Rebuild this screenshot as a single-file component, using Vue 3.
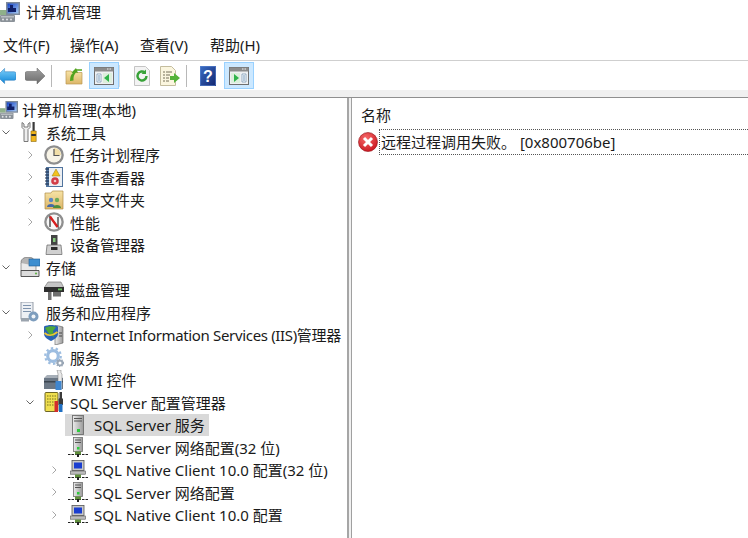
<script setup>
const menus = ['文件(F)', '操作(A)', '查看(V)', '帮助(H)']
const rows = [
  { label: '计算机管理(本地)', icon: 'computer', level: 0 },
  { label: '系统工具', icon: 'tools', level: 1, arrow: 'open' },
  { label: '任务计划程序', icon: 'clock', level: 2, arrow: 'closed' },
  { label: '事件查看器', icon: 'eventlog', level: 2, arrow: 'closed' },
  { label: '共享文件夹', icon: 'share', level: 2, arrow: 'closed' },
  { label: '性能', icon: 'perf', level: 2, arrow: 'closed' },
  { label: '设备管理器', icon: 'device', level: 2 },
  { label: '存储', icon: 'storage', level: 1, arrow: 'open' },
  { label: '磁盘管理', icon: 'disk', level: 2 },
  { label: '服务和应用程序', icon: 'apps', level: 1, arrow: 'open' },
  { label: 'Internet Information Services (IIS)管理器', icon: 'iis', level: 2, arrow: 'closed', tight: true },
  { label: '服务', icon: 'gear', level: 2 },
  { label: 'WMI 控件', icon: 'wmi', level: 2 },
  { label: 'SQL Server 配置管理器', icon: 'sql', level: 2, arrow: 'open' },
  { label: 'SQL Server 服务', icon: 'server', level: 3, selected: true },
  { label: 'SQL Server 网络配置(32 位)', icon: 'netserver', level: 3 },
  { label: 'SQL Native Client 10.0 配置(32 位)', icon: 'client', level: 3, arrow: 'closed' },
  { label: 'SQL Server 网络配置', icon: 'netserver', level: 3, arrow: 'closed' },
  { label: 'SQL Native Client 10.0 配置', icon: 'client', level: 3, arrow: 'closed' }
]
</script>

<template>
  <div class="window">
    <svg class="defs" aria-hidden="true">
      <defs>
        <linearGradient id="screen" x1="0" y1="0" x2="1" y2="1">
          <stop offset="0" stop-color="#1040c8" /><stop offset="1" stop-color="#a9cdf5" />
        </linearGradient>
        <linearGradient id="blueArrow" x1="0" y1="0" x2="0" y2="1">
          <stop offset="0" stop-color="#7fd0fa" /><stop offset="1" stop-color="#0f86d8" />
        </linearGradient>
        <linearGradient id="grayArrow" x1="0" y1="0" x2="0" y2="1">
          <stop offset="0" stop-color="#a2a2a2" /><stop offset="1" stop-color="#6a6a6a" />
        </linearGradient>
        <linearGradient id="folder" x1="0" y1="0" x2="0" y2="1">
          <stop offset="0" stop-color="#f7e3a6" /><stop offset="1" stop-color="#dcb669" />
        </linearGradient>
        <linearGradient id="tower" x1="0" y1="0" x2="1" y2="0">
          <stop offset="0" stop-color="#ececec" /><stop offset="1" stop-color="#9a9a9a" />
        </linearGradient>
        <linearGradient id="help" x1="0" y1="0" x2="1" y2="1">
          <stop offset="0" stop-color="#3b6fc6" /><stop offset="1" stop-color="#12246e" />
        </linearGradient>
        <radialGradient id="err" cx="0.4" cy="0.3" r="0.8">
          <stop offset="0" stop-color="#f56a6a" /><stop offset="1" stop-color="#c8101a" />
        </radialGradient>
      </defs>

      <symbol id="computer" viewBox="0 0 20 20">
        <rect x="6" y="0" width="14" height="13" fill="#7e8a9a" />
        <rect x="7.500" y="1.500" width="11" height="10" fill="url(#screen)" />
        <path d="M10 3h3v3h3v4H8V6h2z" fill="#10206a" />
        <rect x="0" y="8" width="6" height="5" fill="#8fb08a" />
        <rect x="0" y="13" width="15" height="7" rx="1" fill="#8b9299" />
        <rect x="1" y="14" width="13" height="1.500" fill="#b9bec3" />
        <circle cx="3" cy="17.500" r="1" fill="#e4e6e8" /><circle cx="7" cy="17.500" r="1" fill="#e4e6e8" /><circle cx="11" cy="17.500" r="1" fill="#e4e6e8" />
      </symbol>
      <symbol id="tools" viewBox="0 0 20 20">
        <path d="M2 .500v5l2 2V19.500h4V7.500l2-2v-5L8 2v3H4V2z" fill="#eeeeee" stroke="#6b6b6b" stroke-width=".9" />
        <rect x="12.500" y="0" width="2.200" height="9" fill="#3a3a3a" />
        <path d="M11 9h5.200v10.500H11z" fill="#f0b51c" stroke="#8a6a10" stroke-width=".6" />
        <rect x="11.300" y="12" width="4.600" height="2" fill="#2f2f2f" />
      </symbol>
      <symbol id="clock" viewBox="0 0 20 20">
        <circle cx="10" cy="10" r="9.800" fill="#8e8e8e" />
        <circle cx="10" cy="10" r="7.500" fill="#f7f3e6" />
        <path d="M10 10V3A7 7 0 0 1 17 10z" fill="#f2dfa8" />
        <path d="M10 4V10.500H15.500" fill="none" stroke="#555" stroke-width="1.200" />
      </symbol>
      <symbol id="eventlog" viewBox="0 0 20 20">
        <rect x="2" y="0" width="17" height="20" fill="#51749e" />
        <rect x="5" y="1" width="13" height="18" fill="#eceff3" />
        <path d="M1 2h4M1 5h4M1 8h4M1 11h4M1 14h4M1 17h4" stroke="#1c2c4a" stroke-width="1" />
        <path d="M12 2l4 7H8z" fill="#f2c21e" stroke="#96780e" stroke-width=".5" />
        <circle cx="11" cy="14" r="3.800" fill="#d23c46" />
        <circle cx="11" cy="14" r="1.300" fill="#f3c6c8" />
      </symbol>
      <symbol id="share" viewBox="0 0 20 20">
        <path d="M1 3h6l1.500-2H19v18H1z" fill="url(#folder)" stroke="#b08e47" stroke-width=".7" />
        <circle cx="7" cy="10" r="2.200" fill="#5c86c4" /><path d="M3 17c0-4 8-4 8 0z" fill="#4569a6" />
        <circle cx="13" cy="10" r="2.200" fill="#6eaa58" /><path d="M9 18c0-4 8-4 8 0z" fill="#4c8d3c" />
      </symbol>
      <symbol id="perf" viewBox="0 0 20 20">
        <circle cx="10" cy="10" r="9.800" fill="#8f8f8f" />
        <circle cx="10" cy="10" r="7.500" fill="#f7f7f7" />
        <path d="M6 15V5l8 10V5" fill="none" stroke="#3a3a3a" stroke-width="1.300" />
        <path d="M6 4.500L13.500 15" stroke="#d81e1e" stroke-width="2.200" />
      </symbol>
      <symbol id="device" viewBox="0 0 20 20">
        <rect x="7" y="0" width="6.500" height="10" fill="#444" />
        <rect x="9" y="3" width="2.500" height="4" fill="#86c97d" />
        <path d="M3 10h14l1 9.500H2z" fill="#d0d0d0" stroke="#666" stroke-width=".7" />
        <rect x="7" y="12" width="6.500" height="3" fill="#2c2c2c" />
      </symbol>
      <symbol id="storage" viewBox="0 0 20 20">
        <ellipse cx="8" cy="5" rx="7" ry="5" fill="#b4b4b4" stroke="#6f6f6f" stroke-width=".7" />
        <path d="M1 6v8h15V9" fill="#eaeaea" stroke="#777" stroke-width=".7" />
        <path d="M1 13.500h18v6H1z" fill="#dcdcdc" stroke="#444" stroke-width=".9" />
        <rect x="9" y="2" width="11" height="7" fill="#3e8fd0" stroke="#1e5d92" stroke-width=".6" />
        <circle cx="16" cy="16.500" r="1.100" fill="#63b14b" />
      </symbol>
      <symbol id="disk" viewBox="0 0 20 20">
        <path d="M4 2h13l3 6H0z" fill="#c5c5c5" stroke="#6a6a6a" stroke-width=".6" />
        <rect x="0" y="7" width="20" height="5" fill="#2e2e2e" />
        <rect x="14" y="8.500" width="4" height="1.800" fill="#68c25c" />
        <path d="M4 12h3.500v8H4zM9 12h8v4.500H9z" fill="#6f6f6f" />
      </symbol>
      <symbol id="apps" viewBox="0 0 20 20">
        <rect x="1" y="0" width="12" height="17" fill="#eef1f5" stroke="#7e8794" stroke-width=".8" />
        <path d="M3 3.500h8M3 6.500h8M3 9.500h8" stroke="#7e93ad" stroke-width="1.200" />
        <circle cx="13.500" cy="14.500" r="5" fill="#7d9dbd" />
        <circle cx="13.500" cy="14.500" r="2" fill="#f0f4f8" />
        <rect x="1" y="16" width="8" height="3.500" fill="#9ba4ae" />
      </symbol>
      <symbol id="iis" viewBox="0 0 20 20">
        <path d="M11 0l8 2v16l-8 2z" fill="url(#tower)" stroke="#5b5b5b" stroke-width=".6" />
        <path d="M0 1.500c4-2 10-2 14 0v7c0 4-4 6-7 7.500-3-1.500-7-3.500-7-7.500z" fill="#2b63b5" />
        <path d="M1 3c3-2 8-2 11-1L9 6l1 6-5-3z" fill="#4ea83a" />
        <path d="M.5 8c3 3 8 3 13-1" fill="none" stroke="#ecc535" stroke-width="1.800" />
        <path d="M15 8h3M15 11h3" stroke="#444" stroke-width="1" />
      </symbol>
      <symbol id="gear" viewBox="0 0 20 20">
        <circle cx="9" cy="9" r="5.300" fill="#fff" stroke="#9dbde0" stroke-width="3.200" />
        <circle cx="9" cy="9" r="7.800" fill="none" stroke="#9dbde0" stroke-width="2.200" stroke-dasharray="2.400 2.500" />
        <circle cx="16" cy="16" r="2.400" fill="#fff" stroke="#9aa7b6" stroke-width="1.800" />
        <circle cx="16" cy="16" r="3.600" fill="none" stroke="#9aa7b6" stroke-width="1.200" stroke-dasharray="1.300 1.300" />
      </symbol>
      <symbol id="wmi" viewBox="0 0 20 20">
        <path d="M0 8h19v11H0z" fill="#6b7785" />
        <path d="M0 8l3-3h11l5 3z" fill="#a7afb8" />
        <rect x="0" y="11" width="19" height="1.500" fill="#3c4650" />
        <path d="M13 0l4 0v3l1 1v15h-4V4z" fill="#e9e9e9" stroke="#777" stroke-width=".5" />
        <rect x="11.500" y="11" width="6" height="9" fill="#3f86cf" />
      </symbol>
      <symbol id="sql" viewBox="0 0 20 20">
        <rect x="1" y="0.500" width="13" height="19" rx="1" fill="#f0df4e" stroke="#5e5616" stroke-width=".9" />
        <path d="M3 4h9M3 7h9M3 10h7M3 13h7" stroke="#76701f" stroke-width="1" stroke-dasharray="1.500 1" />
        <path d="M15.500 0v6l-1 1v6h4.500V7l-1-1V0z" fill="#3a3a3a" />
        <rect x="10.500" y="9" width="3.500" height="11" fill="#d22c2c" />
        <rect x="15" y="12" width="3.500" height="8" fill="#1f6fc2" />
      </symbol>
      <symbol id="server" viewBox="0 0 20 20">
        <rect x="4.500" y="0.500" width="11" height="19" fill="url(#tower)" stroke="#6f6f6f" stroke-width=".9" />
        <path d="M6 3.500h8M6 6h8" stroke="#555" stroke-width="1" />
        <rect x="9" y="14" width="3" height="3" fill="#2ecb3d" />
      </symbol>
      <symbol id="netserver" viewBox="0 0 20 20">
        <rect x="5.500" y="0.500" width="9" height="14" fill="url(#tower)" stroke="#6f6f6f" stroke-width=".8" />
        <path d="M7 3h6M7 5.500h6" stroke="#555" stroke-width="1" />
        <rect x="9" y="10" width="2.500" height="2.500" fill="#2ecb3d" />
        <path d="M0 17.500h20" stroke="#222" stroke-width="1.100" stroke-dasharray="2.500 1" />
        <rect x="7" y="14.500" width="6" height="3" fill="#5f8f3c" />
        <rect x="9" y="17" width="2" height="3" fill="#222" />
      </symbol>
      <symbol id="client" viewBox="0 0 20 20">
        <rect x="4" y="0.500" width="12" height="10" fill="#c9c9c9" stroke="#555" stroke-width=".8" />
        <rect x="6" y="2.500" width="8" height="6" fill="#1a3ed0" />
        <rect x="2.500" y="11" width="15" height="3.200" fill="#bdbdbd" stroke="#555" stroke-width=".6" />
        <path d="M0 17.500h20" stroke="#222" stroke-width="1.100" stroke-dasharray="2.500 1" />
        <rect x="7" y="14.500" width="6" height="3" fill="#5f8f3c" />
        <rect x="9" y="17" width="2" height="3" fill="#222" />
      </symbol>
      <symbol id="console" viewBox="0 0 20 20">
        <rect x="0.500" y="1.500" width="19" height="17" fill="#eef0f2" stroke="#6f6f6f" />
        <rect x="0.500" y="1.500" width="19" height="4" fill="#8c8c8c" />
        <path d="M13 3h1.500M15.500 3H17" stroke="#eee" />
      </symbol>
    </svg>

    <header class="title-bar">
      <svg class="title-icon"><use href="#computer" /></svg>
      <span>计算机管理</span>
    </header>

    <nav class="menu-bar">
      <span v-for="m in menus" :key="m" class="menu-item">{{ m }}</span>
    </nav>

    <div class="toolbar">
      <svg class="tool back" viewBox="0 0 20 16">
        <path d="M0 8l8-8v3.500h10q2 0 2 2v5q0 2-2 2H8V16z" fill="url(#blueArrow)" stroke="#1b6fb5" stroke-width=".5" />
      </svg>
      <svg class="tool forward" viewBox="0 0 20 16">
        <path d="M20 8l-8-8v3.500H2q-2 0-2 2v5q0 2 2 2h10V16z" fill="url(#grayArrow)" stroke="#666" stroke-width=".5" />
      </svg>
      <i class="sep first-sep"></i>
      <svg class="tool up" viewBox="0 0 18 18">
        <path d="M1 4h5l1.500 1.500H17V17H1z" fill="url(#folder)" stroke="#bb9a55" stroke-width=".7" />
        <path d="M5 14q0-6 3-8l-1.500-.5L11 1l2 5-2-.5q-3 3-2.500 8z" fill="#52a31f" />
        <path d="M11 3h6" stroke="#52a31f" stroke-width="1.500" />
      </svg>
      <span class="tool-box">
        <svg viewBox="0 0 20 20">
          <use href="#console" />
          <path d="M3 8h4v8H3z" fill="#fff" stroke="#6f8fb0" stroke-width=".7" />
          <path d="M4 10h2M4 12h2M4 14h2" stroke="#4d7ca8" stroke-width=".8" />
          <rect x="9" y="7" width="9" height="10" fill="#dcefdc" />
          <path d="M15 8v8l-5-4z" fill="#2fb34a" />
        </svg>
      </span>
      <i class="sep second-sep"></i>
      <svg class="tool page" viewBox="0 0 16 20">
        <path d="M.5.500h11l4 4v15H.5z" fill="#f3f3f3" stroke="#c4c4c4" />
        <path d="M12.500 10a4.500 4.500 0 1 1-1.500-3.400" fill="none" stroke="#38a238" stroke-width="2.400" />
        <path d="M12 3.500v4.500H7.500z" fill="#38a238" />
      </svg>
      <svg class="tool export" viewBox="0 0 20 20">
        <path d="M.5.500h11l4 4v15H.5z" fill="#fbf6df" stroke="#c4bd9e" />
        <path d="M3 6h2M6 6h6M3 9h2M6 9h4M3 12h2M6 12h3M3 15h2M6 15h3" stroke="#77715a" />
        <path d="M10 10h4V7l6 5-6 5v-3h-4z" fill="#55b33a" />
      </svg>
      <i class="sep third-sep"></i>
      <svg class="tool help" viewBox="0 0 16 20">
        <rect width="16" height="20" fill="url(#help)" />
        <rect x="0.500" y="0.500" width="15" height="19" fill="none" stroke="#5d86d0" stroke-width=".6" />
        <text x="8" y="16" text-anchor="middle" class="help-mark">?</text>
      </svg>
      <span class="tool-box last-box">
        <svg viewBox="0 0 20 20">
          <use href="#console" />
          <path d="M13 8h4v8h-4z" fill="#fff" stroke="#6f8fb0" stroke-width=".7" />
          <path d="M14 10h2M14 12h2M14 14h2" stroke="#4d7ca8" stroke-width=".8" />
          <rect x="2" y="7" width="9" height="10" fill="#dcefdc" />
          <path d="M5 8v8l5-4z" fill="#2fb34a" />
        </svg>
      </span>
    </div>

    <div class="strip"></div>

    <main class="panes">
      <section class="tree">
        <div v-for="row in rows" :key="row.label + row.icon" class="row" :class="'level-' + row.level">
          <svg v-if="row.level > 0" class="chevron" viewBox="0 0 12 12">
            <path v-if="row.arrow === 'open'" d="M2.500 4.500L6 8l3.500-3.500" fill="none" stroke="#666" stroke-width="1" />
            <path v-else-if="row.arrow === 'closed'" d="M4.500 2.500L8 6l-3.500 3.500" fill="none" stroke="#a6a6a6" stroke-width="1" />
          </svg>
          <div class="node" :class="{ selected: row.selected }">
            <svg class="node-icon"><use :href="'#' + row.icon" /></svg>
            <span class="label" :class="{ tight: row.tight }">{{ row.label }}</span>
          </div>
        </div>
      </section>
      <div class="splitter"></div>
      <section class="detail">
        <div class="col-head">名称</div>
        <div class="error-row">
          <svg class="error-icon" viewBox="0 0 20 20">
            <circle cx="10" cy="10" r="9.500" fill="url(#err)" stroke="#8f0b12" stroke-width=".6" />
            <path d="M6 6l8 8M14 6l-8 8" stroke="#fff" stroke-width="3" />
          </svg>
          <div class="error-cell">远程过程调用失败。 [0x800706be]</div>
        </div>
      </section>
    </main>
  </div>
</template>

<style scoped>
.window {
  width: 748px;
  height: 538px;
  overflow: hidden;
  background: #fff;
  color: #1a1a1a;
  font-family: "Noto Sans", "Noto Sans CJK SC", sans-serif;
  font-size: 15px;
  display: flex;
  flex-direction: column;
}
.defs { position: absolute; width: 0; height: 0; }
.title-bar {
  height: 22px;
  flex: none;
  display: flex;
  align-items: center;
  gap: 6px;
}
.title-icon { width: 20px; height: 20px; flex: none; margin-top: 2px; }
.menu-bar {
  height: 38px;
  flex: none;
  display: flex;
  align-items: center;
  padding-left: 3px;
  padding-top: 8px;
  box-sizing: border-box;
}
.menu-item { width: 70px; white-space: nowrap; line-height: 20px; }
.menu-item:first-child { width: 67px; }
.toolbar {
  height: 30px;
  flex: none;
  box-sizing: border-box;
  border-top: 1px solid #cfcfcf;
  display: flex;
  align-items: center;
}
.tool { flex: none; display: block; }
.back { width: 19px; height: 16px; margin-left: -3px; }
.forward { width: 20px; height: 16px; margin-left: 9px; }
.sep { width: 1px; height: 22px; background: #b8b8b8; flex: none; }
.first-sep { margin-left: 6px; }
.up { width: 18px; height: 18px; margin-left: 13px; }
.tool-box {
  width: 30px;
  height: 27px;
  box-sizing: border-box;
  flex: none;
  margin-left: 6px;
  background: #cce8ff;
  border: 1px solid #99d1ff;
  display: flex;
  align-items: center;
  justify-content: center;
}
.tool-box svg { width: 20px; height: 20px; }
.second-sep { margin-left: 0; background: #dcdcdc; }
.page { width: 16px; height: 20px; margin-left: 14px; }
.export { width: 20px; height: 20px; margin-left: 10px; }
.third-sep { margin-left: 6px; }
.help { width: 16px; height: 20px; margin-left: 13px; }
.help-mark { font: bold 16px "Liberation Sans", sans-serif; fill: #fff; }
.last-box { margin-left: 8px; }
.strip {
  height: 8px;
  flex: none;
  box-sizing: border-box;
  background: #f0f0f0;
  border-bottom: 1px solid #8f8f8f;
}
.panes { flex: 1; display: flex; min-height: 0; }
.tree {
  width: 347px;
  flex: none;
  padding-top: 0.5px;
  overflow: hidden;
}
.row {
  height: 22.5px;
  display: flex;
  align-items: center;
  white-space: nowrap;
}
.level-1 { padding-left: 0; }
.level-2 { padding-left: 24px; }
.level-3 { padding-left: 48px; }
.chevron { width: 12px; height: 12px; flex: none; }
.node {
  height: 22.5px;
  display: flex;
  align-items: center;
  gap: 6px;
  margin-left: 5px;
  padding: 0 4px 0 3px;
}
.level-0 .node { margin-left: 0; padding: 0; gap: 4px; }
.node.selected { background: #d9d9d9; }
.node-icon { width: 20px; height: 20px; flex: none; }
.level-0 .node-icon { width: 18px; }
.tight { letter-spacing: -0.34px; }
.splitter {
  width: 5px;
  flex: none;
  box-sizing: border-box;
  background: #f0f0f0;
  border-left: 2px solid #a6a6a6;
  border-right: 1px solid #a0a0a0;
}
.detail { flex: 1; min-width: 0; }
.col-head { height: 20px; line-height: 20px; margin: 7px 0 0 9px; }
.error-row {
  display: flex;
  align-items: center;
  margin: 4px 0 0 6px;
}
.error-icon { width: 20px; height: 20px; flex: none; }
.error-cell {
  flex: 1;
  height: 26px;
  line-height: 24px;
  box-sizing: border-box;
  margin-left: 1px;
  padding-left: 1px;
  border: 1px dotted #555;
  border-right: none;
  white-space: nowrap;
}
</style>
